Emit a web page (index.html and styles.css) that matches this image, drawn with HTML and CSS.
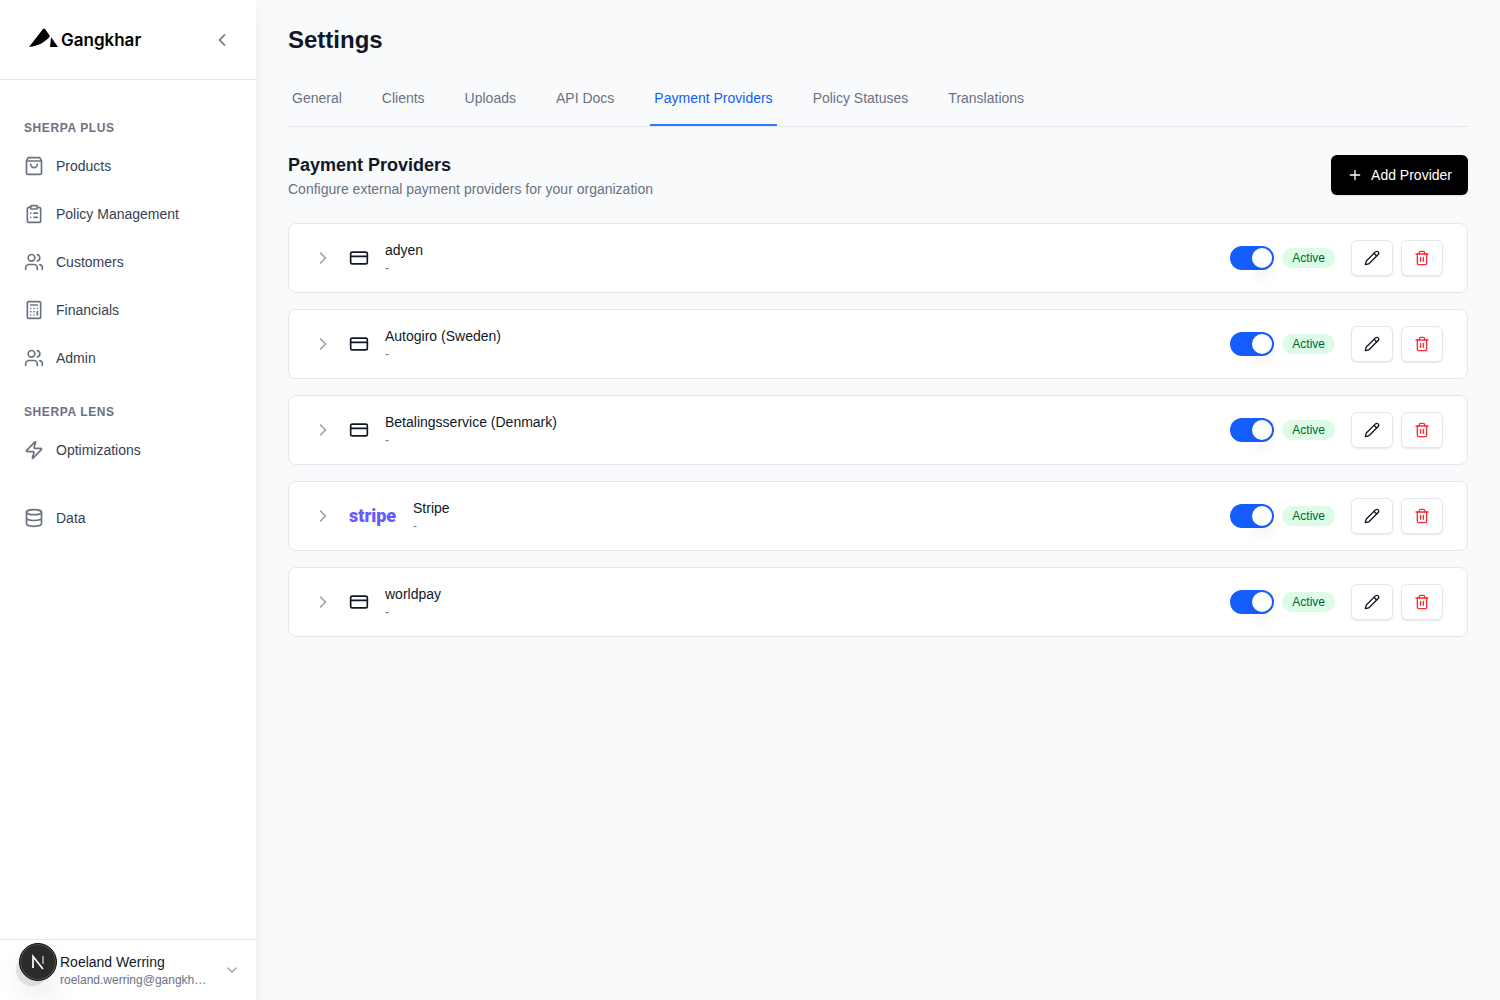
FILE: index.html
```html
<!DOCTYPE html>
<html lang="en">
<head>
	<meta charset="UTF-8">
	<title>Settings - Gangkhar</title>
	<link rel="stylesheet" href="styles.css">
</head>
<body>
	<!-- shared icons -->
	<svg class="sprite" aria-hidden="true">
		<symbol id="chevron-right" viewBox="0 0 24 24"><path d="m9 18 6-6-6-6"/></symbol>
		<symbol id="users" viewBox="0 0 24 24">
			<path d="M16 21v-2a4 4 0 0 0-4-4H6a4 4 0 0 0-4 4v2"/>
			<circle cx="9" cy="7" r="4"/>
			<path d="M22 21v-2a4 4 0 0 0-3-3.87"/>
			<path d="M16 3.13a4 4 0 0 1 0 7.75"/>
		</symbol>
		<symbol id="card" viewBox="0 0 24 24">
			<rect x="2" y="5" width="20" height="14" rx="2"/>
			<path d="M2 10h20"/>
		</symbol>
		<symbol id="pencil" viewBox="0 0 24 24">
			<path d="M21.174 6.812a1 1 0 0 0-3.986-3.987L3.842 16.174a2 2 0 0 0-.5.83l-1.321 4.352a.5.5 0 0 0 .623.622l4.353-1.32a2 2 0 0 0 .83-.497z"/>
			<path d="m15 5 4 4"/>
		</symbol>
		<symbol id="trash" viewBox="0 0 24 24">
			<path d="M3 6h18"/>
			<path d="M19 6v14c0 1-1 2-2 2H7c-1 0-2-1-2-2V6"/>
			<path d="M8 6V4c0-1 1-2 2-2h4c1 0 2 1 2 2v2"/>
			<path d="M10 11v6M14 11v6"/>
		</symbol>
	</svg>

	<div class="layout">
		<aside class="sidebar">
			<div class="sidebar-header">
				<a class="logo" href="#">
					<svg width="31" height="20" viewBox="0 0 31 20"><path d="M1 19 15 1q1-1 2 0l5 7c-4 6-12 10-21 11zM23 9l7 10h-8z"/></svg>
					<span>Gangkhar</span>
				</a>
				<button class="collapse" aria-label="Collapse sidebar">
					<svg class="icon" width="20" height="20" viewBox="0 0 24 24"><path d="m15 18-6-6 6-6"/></svg>
				</button>
			</div>

			<nav class="menu">
				<h2>Sherpa Plus</h2>
				<a href="#">
					<svg class="icon" width="20" height="20" viewBox="0 0 24 24"><path d="M5 2h14l2 4v14a2 2 0 0 1-2 2H5a2 2 0 0 1-2-2V6z"/><path d="M3 6h18M16 10a4 4 0 0 1-8 0"/></svg>
					Products
				</a>
				<a href="#">
					<svg class="icon" width="20" height="20" viewBox="0 0 24 24"><rect x="8" y="2" width="8" height="4" rx="1"/><path d="M16 4h2a2 2 0 0 1 2 2v14a2 2 0 0 1-2 2H6a2 2 0 0 1-2-2V6a2 2 0 0 1 2-2h2M12 11h4M12 16h4M8 11h.01M8 16h.01"/></svg>
					Policy Management
				</a>
				<a href="#">
					<svg class="icon" width="20" height="20"><use href="#users"/></svg>
					Customers
				</a>
				<a href="#">
					<svg class="icon" width="20" height="20" viewBox="0 0 24 24"><rect x="4" y="2" width="16" height="20" rx="2"/><path d="M8 6h8M16 14v4M16 10h.01M12 10h.01M8 10h.01M12 14h.01M8 14h.01M12 18h.01M8 18h.01"/></svg>
					Financials
				</a>
				<a href="#">
					<svg class="icon" width="20" height="20"><use href="#users"/></svg>
					Admin
				</a>

				<h2>Sherpa Lens</h2>
				<a href="#">
					<svg class="icon" width="20" height="20" viewBox="0 0 24 24"><path d="M4 14a1 1 0 0 1-.78-1.63l9.9-10.2a.5.5 0 0 1 .86.46l-1.92 6.02A1 1 0 0 0 13 10h7a1 1 0 0 1 .78 1.63l-9.9 10.2a.5.5 0 0 1-.86-.46l1.92-6.02A1 1 0 0 0 11 14z"/></svg>
					Optimizations
				</a>
				<a class="separate" href="#">
					<svg class="icon" width="20" height="20" viewBox="0 0 24 24"><ellipse cx="12" cy="5" rx="9" ry="3"/><path d="M3 5v14a9 3 0 0 0 18 0V5M3 12a9 3 0 0 0 18 0"/></svg>
					Data
				</a>
			</nav>

			<button class="user">
				<span class="avatar">
					<span class="badge">
						<svg width="36" height="36" viewBox="0 0 36 36"><path d="M13 24V12.500L23 25" fill="none" stroke="#fff" stroke-width="1.700"/><path d="M23 12v8" stroke="#aaa" stroke-width="1.700"/></svg>
					</span>
				</span>
				<span class="user-text">
					<span class="user-name">Roeland Werring</span>
					<span class="user-email">roeland.werring@gangkh…</span>
				</span>
				<svg class="icon" width="16" height="16" viewBox="0 0 24 24"><path d="m6 9 6 6 6-6"/></svg>
			</button>
		</aside>

		<main class="content">
			<h1>Settings</h1>
			<nav class="tabs">
				<a href="#">General</a>
				<a href="#">Clients</a>
				<a href="#">Uploads</a>
				<a href="#">API Docs</a>
				<a class="active" href="#">Payment Providers</a>
				<a href="#">Policy Statuses</a>
				<a href="#">Translations</a>
			</nav>

			<div class="section-header">
				<div>
					<h2>Payment Providers</h2>
					<p>Configure external payment providers for your organization</p>
				</div>
				<button class="add">
					<svg class="icon" width="16" height="16" viewBox="0 0 24 24"><path d="M5 12h14M12 5v14"/></svg>
					Add Provider
				</button>
			</div>

			<ul class="providers">
				<li>
					<button class="expand" aria-label="Expand adyen"><svg class="icon" width="20" height="20"><use href="#chevron-right"/></svg></button>
					<svg class="icon card" width="20" height="20"><use href="#card"/></svg>
					<div class="info"><h3>adyen</h3><p>-</p></div>
					<input class="switch" type="checkbox" role="switch" aria-label="adyen active" checked>
					<span class="status">Active</span>
					<button class="action edit" aria-label="Edit adyen"><svg class="icon" width="16" height="16"><use href="#pencil"/></svg></button>
					<button class="action delete" aria-label="Delete adyen"><svg class="icon" width="16" height="16"><use href="#trash"/></svg></button>
				</li>
				<li>
					<button class="expand" aria-label="Expand Autogiro"><svg class="icon" width="20" height="20"><use href="#chevron-right"/></svg></button>
					<svg class="icon card" width="20" height="20"><use href="#card"/></svg>
					<div class="info"><h3>Autogiro (Sweden)</h3><p>-</p></div>
					<input class="switch" type="checkbox" role="switch" aria-label="Autogiro active" checked>
					<span class="status">Active</span>
					<button class="action edit" aria-label="Edit Autogiro"><svg class="icon" width="16" height="16"><use href="#pencil"/></svg></button>
					<button class="action delete" aria-label="Delete Autogiro"><svg class="icon" width="16" height="16"><use href="#trash"/></svg></button>
				</li>
				<li>
					<button class="expand" aria-label="Expand Betalingsservice"><svg class="icon" width="20" height="20"><use href="#chevron-right"/></svg></button>
					<svg class="icon card" width="20" height="20"><use href="#card"/></svg>
					<div class="info"><h3>Betalingsservice (Denmark)</h3><p>-</p></div>
					<input class="switch" type="checkbox" role="switch" aria-label="Betalingsservice active" checked>
					<span class="status">Active</span>
					<button class="action edit" aria-label="Edit Betalingsservice"><svg class="icon" width="16" height="16"><use href="#pencil"/></svg></button>
					<button class="action delete" aria-label="Delete Betalingsservice"><svg class="icon" width="16" height="16"><use href="#trash"/></svg></button>
				</li>
				<li>
					<button class="expand" aria-label="Expand Stripe"><svg class="icon" width="20" height="20"><use href="#chevron-right"/></svg></button>
					<span class="stripe">stripe</span>
					<div class="info"><h3>Stripe</h3><p>-</p></div>
					<input class="switch" type="checkbox" role="switch" aria-label="Stripe active" checked>
					<span class="status">Active</span>
					<button class="action edit" aria-label="Edit Stripe"><svg class="icon" width="16" height="16"><use href="#pencil"/></svg></button>
					<button class="action delete" aria-label="Delete Stripe"><svg class="icon" width="16" height="16"><use href="#trash"/></svg></button>
				</li>
				<li>
					<button class="expand" aria-label="Expand worldpay"><svg class="icon" width="20" height="20"><use href="#chevron-right"/></svg></button>
					<svg class="icon card" width="20" height="20"><use href="#card"/></svg>
					<div class="info"><h3>worldpay</h3><p>-</p></div>
					<input class="switch" type="checkbox" role="switch" aria-label="worldpay active" checked>
					<span class="status">Active</span>
					<button class="action edit" aria-label="Edit worldpay"><svg class="icon" width="16" height="16"><use href="#pencil"/></svg></button>
					<button class="action delete" aria-label="Delete worldpay"><svg class="icon" width="16" height="16"><use href="#trash"/></svg></button>
				</li>
			</ul>
		</main>
	</div>
</body>
</html>
```

FILE: styles.css
```css
* { margin: 0; padding: 0; box-sizing: border-box; }
body {
	background-color: #f9fafb;
	color: #101828;
	font: 14px/20px "Liberation Sans", Arial, sans-serif;
}
a { color: inherit; text-decoration: none; }
button { font: inherit; color: inherit; background: none; border: none; cursor: pointer; }
.sprite { display: none; }
.icon {
	flex: none;
	display: block;
	fill: none;
	stroke: currentColor;
	stroke-width: 2;
	stroke-linecap: round;
	stroke-linejoin: round;
}
.layout {
	display: flex;
	min-height: 100vh;
}

/* sidebar */
.sidebar {
	flex: none;
	display: flex;
	flex-direction: column;
	width: 256px;
	background-color: #fff;
	box-shadow: 0 10px 15px -3px rgba(0,0,0,.1), 0 4px 6px -4px rgba(0,0,0,.1);
}
.sidebar-header {
	display: flex;
	align-items: center;
	justify-content: space-between;
	height: 80px;
	padding: 0 24px 0 28px;
	border-bottom: 1px solid #e5e7eb;
}
.logo {
	display: flex;
	align-items: center;
	gap: 2px;
	color: #000;
	font: 600 17px/24px Inter, sans-serif;
}
.logo svg { margin-bottom: 4px; }
.collapse { color: #6a7282; }
.menu {
	flex: 1;
	padding: 36px 12px 0;
}
.menu h2 {
	margin-bottom: 4px;
	padding: 4px 12px;
	color: #6a7282;
	font-size: 12px;
	line-height: 16px;
	letter-spacing: 0.05em;
	text-transform: uppercase;
}
.menu a {
	display: flex;
	align-items: center;
	gap: 12px;
	height: 44px;
	margin-bottom: 4px;
	padding: 0 12px;
	color: #364153;
}
.menu a + h2 { margin-top: 20px; }
.menu .icon { color: #6a7282; }
.menu .separate { margin-top: 24px; }
.user {
	display: flex;
	align-items: center;
	gap: 12px;
	height: 61px;
	padding: 0 16px;
	border-top: 1px solid #e5e7eb;
	text-align: left;
}
.avatar {
	position: relative;
	width: 32px;
	height: 32px;
	border-radius: 50%;
	background-color: #e5e7eb;
}
.badge {
	position: absolute;
	left: 3px;
	bottom: 5px;
	width: 38px;
	height: 38px;
	border: 1px solid #111;
	border-radius: 50%;
	background-color: #2b2b2b;
	box-shadow: inset 0 0 0 1px #555, 0 16px 32px -8px rgba(0,0,0,.24);
}
.badge svg { display: block; }
.user-text {
	flex: 1;
	min-width: 0;
}
.user-text span {
	display: block;
	white-space: nowrap;
}
.user-email {
	color: #6a7282;
	font-size: 12px;
	line-height: 16px;
}
.user .icon { color: #99a1af; }

/* page */
.content {
	flex: 1;
	min-width: 0;
	padding: 24px 32px;
}
h1 {
	font-size: 24px;
	line-height: 32px;
}
.tabs {
	display: flex;
	gap: 32px;
	margin-top: 16px;
	border-bottom: 1px solid #e5e7eb;
	color: #6a7282;
}
.tabs a {
	padding: 16px 4px;
	border-bottom: 2px solid transparent;
}
.tabs .active {
	color: #155dfc;
	border-color: #2b7fff;
}
.section-header {
	display: flex;
	align-items: center;
	justify-content: space-between;
	margin: 24px 0;
}
.section-header h2 {
	font-size: 18px;
	line-height: 28px;
}
.section-header p { color: #6a7282; }
.add {
	display: flex;
	align-items: center;
	gap: 8px;
	height: 40px;
	padding: 0 16px;
	border-radius: 6px;
	background-color: #000;
	color: #fff;
	box-shadow: 0 1px 2px rgba(0,0,0,.1);
}
.providers {
	display: grid;
	gap: 16px;
	list-style: none;
}
.providers li {
	display: flex;
	align-items: center;
	height: 70px;
	padding: 0 24px;
	border: 1px solid #e5e7eb;
	border-radius: 8px;
	background-color: #fff;
}
.expand {
	margin-right: 16px;
	color: #99a1af;
}
.card, .stripe { margin-right: 16px; }
.stripe {
	width: 48px;
	color: #635bff;
	font: 900 18px/20px Roboto, sans-serif;
}
.info { flex: 1; }
.info h3 {
	font-size: 14px;
	font-weight: 400;
}
.info p {
	color: #6a7282;
	font-size: 12px;
	line-height: 16px;
}
.switch {
	appearance: none;
	display: flex;
	width: 44px;
	height: 24px;
	padding: 2px;
	border-radius: 12px;
	background-color: #d1d5dc;
	cursor: pointer;
}
.switch::before {
	content: "";
	width: 20px;
	height: 20px;
	border-radius: 50%;
	background-color: #fff;
	box-shadow: 0 10px 15px -3px rgba(0,0,0,.1);
}
.switch:checked {
	justify-content: flex-end;
	background-color: #155dfc;
}
.status {
	margin: 0 16px 0 8px;
	padding: 2px 10px;
	border-radius: 10px;
	background-color: #dcfce7;
	color: #016630;
	font-size: 12px;
	line-height: 16px;
}
.action {
	display: grid;
	place-items: center;
	width: 42px;
	height: 36px;
	border: 1px solid #e2e8f0;
	border-radius: 6px;
	background-color: #fff;
	box-shadow: 0 1px 2px rgba(0,0,0,.1);
}
.delete {
	margin-left: 8px;
	color: #fb2c36;
}
```
